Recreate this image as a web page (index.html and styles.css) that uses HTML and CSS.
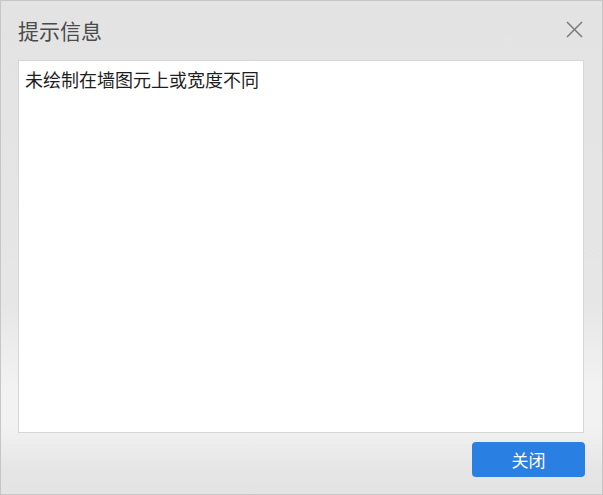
FILE: index.html
```html
<!DOCTYPE html>
<html lang="zh-CN">
<head>
    <meta charset="UTF-8">
    <meta name="viewport" content="width=device-width, initial-scale=1.0">
    <title>提示信息</title>
    <link rel="stylesheet" href="styles.css">
</head>
<body>
    <div class="dialog">
        <div class="dialog-header">
            <span class="dialog-title">提示信息</span>
            <button class="close-btn" type="button" aria-label="关闭">
                <svg width="17" height="17" viewBox="0 0 17 17">
                    <path d="M1 1 L16 16 M16 1 L1 16" stroke="#7b7b7b" stroke-width="1.5" fill="none"/>
                </svg>
            </button>
        </div>

        <div class="dialog-body">
            <div class="message">未绘制在墙图元上或宽度不同</div>
        </div>

        <div class="dialog-footer">
            <button class="btn-primary" type="button">关闭</button>
        </div>
    </div>
</body>
</html>
```

FILE: styles.css
```css
html, body {
    margin: 0;
    padding: 0;
}

body {
    font-family: "Noto Sans CJK SC", "Noto Sans", sans-serif;
    width: 603px;
    height: 495px;
    overflow: hidden;
}

.dialog {
    box-sizing: border-box;
    width: 603px;
    height: 495px;
    border: 1px solid #c6c6c6;
    padding: 0 18px 0 17px;
    display: flex;
    flex-direction: column;
    background: linear-gradient(to bottom, #e4e3e3 0, #e6e6e6 300px, #f2f2f2 385px, #f2f2f2 425px, #e5e5e5 470px, #e4e4e4 100%);
}

/* header */
.dialog-header {
    height: 59px;
    display: flex;
    align-items: center;
    justify-content: space-between;
}

.dialog-title {
    font-size: 21px;
    color: #4a4a4a;
    margin-top: -2px;
}

.close-btn {
    border: none;
    background: none;
    padding: 0;
    width: 17px;
    height: 17px;
    margin-right: 1px;
    margin-top: -2px;
    cursor: pointer;
}

.close-btn svg {
    display: block;
}

/* content */
.dialog-body {
    flex: 0 0 auto;
    height: 373px;
    box-sizing: border-box;
    background: #ffffff;
    border: 1px solid #d6d6d6;
    padding: 5px 6px;
}

.message {
    font-size: 18px;
    line-height: 26px;
    color: #1e1e1e;
}

/* footer */
.dialog-footer {
    display: flex;
    justify-content: flex-end;
    padding-top: 9px;
}

.btn-primary {
    width: 113px;
    height: 35px;
    margin-right: -1px;
    border: none;
    border-radius: 4px;
    background-color: #2a7fe3;
    color: #ffffff;
    font-family: inherit;
    font-size: 17px;
    cursor: pointer;
}
```
